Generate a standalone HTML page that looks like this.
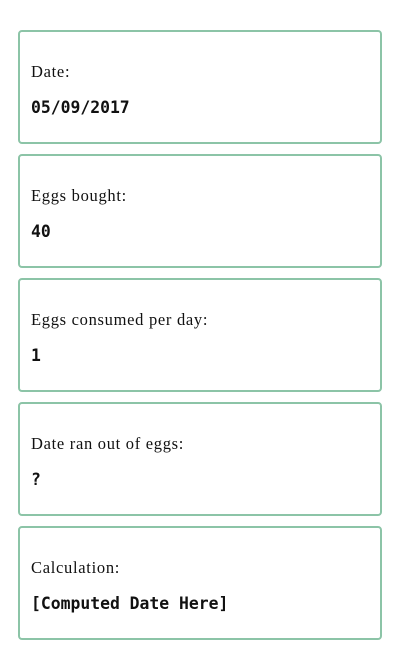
<!DOCTYPE html>
<html><head><style>
body{margin:0;width:400px;height:650px;background:#fff;position:relative;overflow:hidden}
.b{position:absolute;left:18px;width:360px;height:110px;border:2px solid #8cc4a7;border-radius:4px;box-sizing:content-box}
.l{position:absolute;left:11px;top:30px;font:16.5px "Liberation Serif",serif;letter-spacing:0.7px;color:#111}
.v{position:absolute;left:11px;top:66px;font:bold 16.4px "DejaVu Sans Mono",monospace;color:#111}
</style></head><body>
<div class="b" style="top:30px"><div class="l">Date:</div><div class="v">05/09/2017</div></div>
<div class="b" style="top:154px"><div class="l">Eggs bought:</div><div class="v">40</div></div>
<div class="b" style="top:278px"><div class="l">Eggs consumed per day:</div><div class="v">1</div></div>
<div class="b" style="top:402px"><div class="l">Date ran out of eggs:</div><div class="v">?</div></div>
<div class="b" style="top:526px"><div class="l">Calculation:</div><div class="v">[Computed Date Here]</div></div>
</body></html>
